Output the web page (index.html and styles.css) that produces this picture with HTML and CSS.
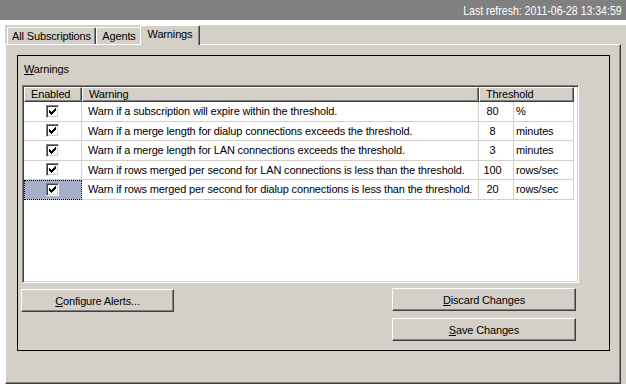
FILE: index.html
```html
<!DOCTYPE html>
<html lang="en">
<head>
    <meta charset="UTF-8">
    <title>Replication Monitor - Warnings</title>
    <link rel="stylesheet" href="styles.css">
</head>
<body>
    <div class="topbar"><span class="refresh">Last refresh: 2011-06-28 13:34:59</span></div>

    <div class="tabctl">
        <div class="tabstrip">
            <div class="tab tab-subs">All Subscriptions</div>
            <div class="tab tab-agents">Agents</div>
            <div class="tab active">Warnings</div>
        </div>

        <div class="panel">
            <div class="group">
                <div class="group-label"><u>W</u>arnings</div>

                <div class="grid">
                    <div class="grid-head">
                        <div class="hcell">Enabled</div>
                        <div class="hcell">Warning</div>
                        <div class="hcell">Threshold</div>
                    </div>
                    <div class="grid-row">
                        <div class="cell check-cell"><span class="checkbox"><svg width="7" height="7" viewBox="0 0 7 7"><path d="M6 0h1v1h-1zM5 1h2v1h-2zM0 2h1v1h-1zM4 2h3v1h-3zM0 3h2v1h-2zM3 3h3v1h-3zM0 4h5v1h-5zM1 5h3v1h-3zM2 6h1v1h-1z"/></svg></span></div>
                        <div class="cell">Warn if a subscription will expire within the threshold.</div>
                        <div class="cell value">80</div>
                        <div class="cell unit">%</div>
                    </div>
                    <div class="grid-row">
                        <div class="cell check-cell"><span class="checkbox"><svg width="7" height="7" viewBox="0 0 7 7"><path d="M6 0h1v1h-1zM5 1h2v1h-2zM0 2h1v1h-1zM4 2h3v1h-3zM0 3h2v1h-2zM3 3h3v1h-3zM0 4h5v1h-5zM1 5h3v1h-3zM2 6h1v1h-1z"/></svg></span></div>
                        <div class="cell">Warn if a merge length for dialup connections exceeds the threshold.</div>
                        <div class="cell value">8</div>
                        <div class="cell unit">minutes</div>
                    </div>
                    <div class="grid-row">
                        <div class="cell check-cell"><span class="checkbox"><svg width="7" height="7" viewBox="0 0 7 7"><path d="M6 0h1v1h-1zM5 1h2v1h-2zM0 2h1v1h-1zM4 2h3v1h-3zM0 3h2v1h-2zM3 3h3v1h-3zM0 4h5v1h-5zM1 5h3v1h-3zM2 6h1v1h-1z"/></svg></span></div>
                        <div class="cell">Warn if a merge length for LAN connections exceeds the threshold.</div>
                        <div class="cell value">3</div>
                        <div class="cell unit">minutes</div>
                    </div>
                    <div class="grid-row">
                        <div class="cell check-cell"><span class="checkbox"><svg width="7" height="7" viewBox="0 0 7 7"><path d="M6 0h1v1h-1zM5 1h2v1h-2zM0 2h1v1h-1zM4 2h3v1h-3zM0 3h2v1h-2zM3 3h3v1h-3zM0 4h5v1h-5zM1 5h3v1h-3zM2 6h1v1h-1z"/></svg></span></div>
                        <div class="cell">Warn if rows merged per second for LAN connections is less than the threshold.</div>
                        <div class="cell value">100</div>
                        <div class="cell unit">rows/sec</div>
                    </div>
                    <div class="grid-row">
                        <div class="cell check-cell selected"><span class="checkbox"><svg width="7" height="7" viewBox="0 0 7 7"><path d="M6 0h1v1h-1zM5 1h2v1h-2zM0 2h1v1h-1zM4 2h3v1h-3zM0 3h2v1h-2zM3 3h3v1h-3zM0 4h5v1h-5zM1 5h3v1h-3zM2 6h1v1h-1z"/></svg></span></div>
                        <div class="cell">Warn if rows merged per second for dialup connections is less than the threshold.</div>
                        <div class="cell value">20</div>
                        <div class="cell unit">rows/sec</div>
                    </div>
                </div>

                <div class="actions">
                    <button class="btn btn-config"><u>C</u>onfigure Alerts...</button>
                    <div class="actions-right">
                        <button class="btn btn-wide"><u>D</u>iscard Changes</button>
                        <button class="btn btn-wide"><u>S</u>ave Changes</button>
                    </div>
                </div>
            </div>
        </div>
    </div>
</body>
</html>
```

FILE: styles.css
```css
body {
    margin: 0;
    width: 626px;
    height: 390px;
    background: #ffffff;
    font-family: 'Liberation Sans', Arial, sans-serif;
    font-size: 11px;
    letter-spacing: -0.15px;
    color: #000000;
    overflow: hidden;
}

.topbar {
    height: 20px;
    background: #808080;
    color: #ffffff;
    font-size: 13px;
    letter-spacing: 0;
    line-height: 22px;
    text-align: right;
    padding-right: 4px;
}

.refresh {
    display: inline-block;
    transform: scaleX(0.81);
    transform-origin: right center;
}

/* tab control */
.tabctl {
    margin: 5px 0 0 5px;
    height: 359px;
    background: #d4d0c8;
}

.tabstrip {
    display: flex;
    align-items: flex-end;
    height: 19px;
    padding-left: 2px;
}

.tab {
    position: relative;
    height: 17px;
    box-sizing: border-box;
    padding-top: 2px;
    text-align: center;
    line-height: 13px;
    white-space: nowrap;
    border-top: 1px solid #ffffff;
    border-left: 1px solid #ffffff;
    border-right: 1px solid #404040;
    box-shadow: inset -1px 0 #808080;
    border-radius: 2px 2px 0 0;
}

.tab-subs {
    width: 89px;
}

.tab-agents {
    width: 46px;
}

.tab.active {
    z-index: 1;
    width: 60px;
    height: 20px;
    margin: 0 -2px -1px -2px;
    background: #d4d0c8;
}

.panel {
    width: 616px;
    height: 340px;
    box-sizing: border-box;
    border-top: 1px solid #ffffff;
    border-left: 1px solid #ffffff;
    border-right: 1px solid #404040;
    border-bottom: 1px solid #404040;
    box-shadow: inset -1px -1px #808080;
    padding: 10px 0 0 11px;
}

.group {
    width: 593px;
    height: 296px;
    box-sizing: border-box;
    border: 1px solid #000000;
    padding: 7px 0 0 4px;
}

.group-label {
    line-height: 13px;
    padding-left: 2px;
}

/* grid */
.grid {
    width: 557px;
    height: 198px;
    box-sizing: border-box;
    margin-top: 9px;
    background: #ffffff;
    border: 1px solid;
    border-color: #808080 #ffffff #ffffff #808080;
    box-shadow: inset 1px 1px #404040, inset -1px -1px #d4d0c8;
    padding: 1px;
}

.grid-head {
    display: grid;
    grid-template-columns: 58px 397px 95px;
}

.hcell {
    height: 15px;
    box-sizing: border-box;
    background: #d4d0c8;
    border-top: 1px solid #ffffff;
    border-left: 1px solid #ffffff;
    border-right: 1px solid #404040;
    border-bottom: 1px solid #404040;
    box-shadow: inset -1px -1px #808080;
    padding-left: 6px;
    line-height: 13px;
}

.grid-row {
    display: grid;
    grid-template-columns: 58px 397px 35px 60px;
}

.cell {
    height: 19.5px;
    box-sizing: border-box;
    border-right: 1px solid #d4d0c8;
    border-bottom: 1px solid #d4d0c8;
    padding-left: 6px;
    line-height: 19px;
    white-space: nowrap;
}

.cell.value {
    padding: 0 7px 0 0;
    text-align: center;
}

.cell.unit {
    padding-left: 2px;
}

.check-cell {
    display: flex;
    justify-content: center;
    align-items: center;
    padding: 0;
}

.check-cell.selected {
    background: #a8b0c9;
    outline: 1px dotted #000000;
    outline-offset: -1px;
}

.checkbox {
    display: flex;
    justify-content: center;
    align-items: center;
    width: 13px;
    height: 13px;
    box-sizing: border-box;
    background: #ffffff;
    border: 1px solid;
    border-color: #808080 #ffffff #ffffff #808080;
    box-shadow: inset 1px 1px #404040, inset -1px -1px #d4d0c8;
}

.checkbox svg {
    display: block;
    shape-rendering: crispEdges;
}

/* buttons */
.actions {
    display: flex;
    justify-content: space-between;
    margin: 5px 0 0 -1px;
    padding-right: 33px;
}

.actions-right {
    display: flex;
    flex-direction: column;
    gap: 7px;
}

.btn {
    height: 23px;
    box-sizing: border-box;
    background: #d4d0c8;
    border: 1px solid;
    border-color: #ffffff #404040 #404040 #ffffff;
    box-shadow: inset -1px -1px #808080;
    font-family: 'Liberation Sans', Arial, sans-serif;
    font-size: 11px;
    letter-spacing: -0.15px;
    color: #000000;
    padding: 0;
}

.btn-config {
    width: 153px;
    margin-top: 1px;
}

.btn-wide {
    width: 184px;
}
```
